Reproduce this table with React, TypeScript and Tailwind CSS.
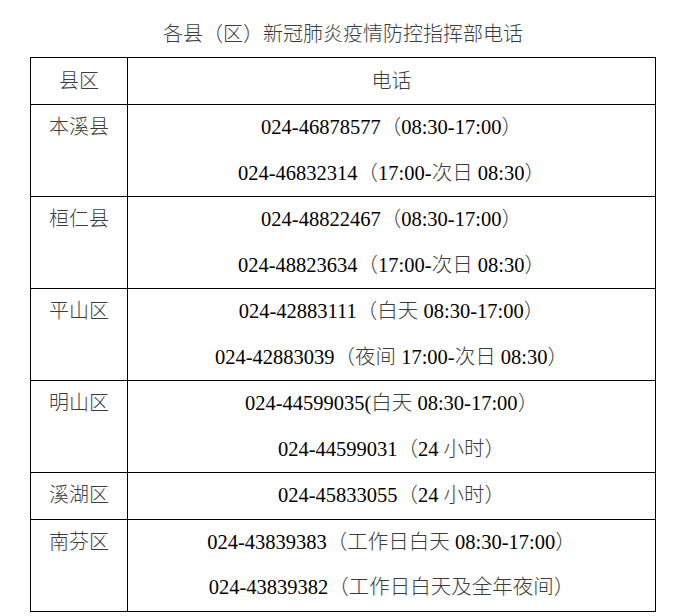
import React from "react";

const rows: { name: string; lines: string[] }[] = [
  { name: "本溪县", lines: ["024-46878577（08:30-17:00）", "024-46832314（17:00-次日 08:30）"] },
  { name: "桓仁县", lines: ["024-48822467（08:30-17:00）", "024-48823634（17:00-次日 08:30）"] },
  { name: "平山区", lines: ["024-42883111（白天 08:30-17:00）", "024-42883039（夜间 17:00-次日 08:30）"] },
  { name: "明山区", lines: ["024-44599035(白天 08:30-17:00）", "024-44599031（24 小时）"] },
  { name: "溪湖区", lines: ["024-45833055（24 小时）"] },
  { name: "南芬区", lines: ["024-43839383（工作日白天 08:30-17:00）", "024-43839382（工作日白天及全年夜间）"] },
];

function Mixed({ text }: { text: string }) {
  const parts = text.split(/([\u3000-\u9fff\uff00-\uffef]+)/);
  return (
    <>
      {parts.map((p, i) =>
        /[\u3000-\u9fff\uff00-\uffef]/.test(p) ? (
          <span key={i} className="text-[#3c3c3c] font-light">
            {p}
          </span>
        ) : (
          <span key={i} className="text-black">
            {p}
          </span>
        )
      )}
    </>
  );
}

export default function App() {
  return (
    <div
      className="w-[678px] h-[616px] bg-white overflow-hidden"
      style={{ fontFamily: '"Liberation Serif", "Noto Sans CJK SC", serif' }}
    >
      <div className="pt-[12px] pl-[30px]">
        <div className="w-[626px] text-center text-[20px] leading-[45px] h-[45px]">
          <Mixed text="各县（区）新冠肺炎疫情防控指挥部电话" />
        </div>
        <table className="border-collapse w-[626px] table-fixed text-[20.5px]">
          <colgroup>
            <col className="w-[97px]" />
            <col />
          </colgroup>
          <tbody>
            <tr>
              <td className="border border-black p-0 text-center align-top">
                <div className="h-[46px] leading-[46px] text-[20px]">
                  <Mixed text="县区" />
                </div>
              </td>
              <td className="border border-black p-0 text-center align-top">
                <div className="h-[46px] leading-[46px] text-[20px]">
                  <Mixed text="电话" />
                </div>
              </td>
            </tr>
            {rows.map((r) => (
              <tr key={r.name}>
                <td className="border border-black p-0 text-center align-top">
                  <div className="h-[45.5px] leading-[45.5px] text-[20px]">
                    <Mixed text={r.name} />
                  </div>
                </td>
                <td className="border border-black p-0 text-center align-top">
                  {r.lines.map((l) => (
                    <div key={l} className="h-[45.5px] leading-[45.5px] whitespace-nowrap">
                      <Mixed text={l} />
                    </div>
                  ))}
                </td>
              </tr>
            ))}
          </tbody>
        </table>
      </div>
    </div>
  );
}
